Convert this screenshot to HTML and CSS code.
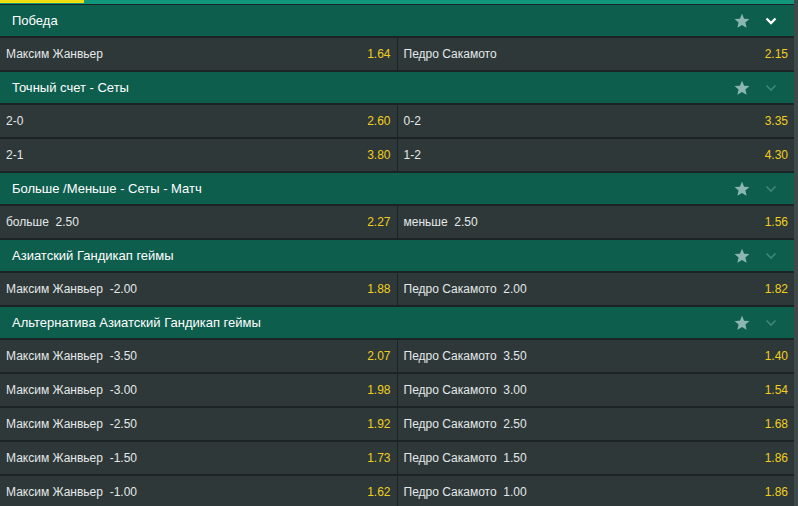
FILE: index.html
```html
<!DOCTYPE html>
<html>
<head>
	<title>Рынки</title>
	<link rel="stylesheet" href="styles.css">
</head>
<body>
	<div class="page">
		<div class="markets">
			<div class="tabbar"><span class="tab-active"></span></div>

			<!-- Победа -->
			<div class="market-head">
				<span class="market-title">Победа</span>
				<svg class="star" viewBox="0 0 16 16"><polygon points="8,0.8 10.1,5.7 15.4,6.1 11.4,9.6 12.6,14.8 8,12.1 3.4,14.8 4.6,9.6 0.6,6.1 5.9,5.7"/></svg>
				<svg class="chevron open" viewBox="0 0 12 8"><polyline points="1.5,1.5 6,6 10.5,1.5"/></svg>
			</div>
			<div class="row">
				<div class="cell"><span class="name">Максим Жанвьер</span><span class="odd">1.64</span></div>
				<div class="cell"><span class="name">Педро Сакамото</span><span class="odd">2.15</span></div>
			</div>

			<!-- Точный счет -->
			<div class="market-head">
				<span class="market-title">Точный счет - Сеты</span>
				<svg class="star" viewBox="0 0 16 16"><polygon points="8,0.8 10.1,5.7 15.4,6.1 11.4,9.6 12.6,14.8 8,12.1 3.4,14.8 4.6,9.6 0.6,6.1 5.9,5.7"/></svg>
				<svg class="chevron" viewBox="0 0 12 8"><polyline points="1.5,1.5 6,6 10.5,1.5"/></svg>
			</div>
			<div class="row">
				<div class="cell"><span class="name">2-0</span><span class="odd">2.60</span></div>
				<div class="cell"><span class="name">0-2</span><span class="odd">3.35</span></div>
			</div>
			<div class="row">
				<div class="cell"><span class="name">2-1</span><span class="odd">3.80</span></div>
				<div class="cell"><span class="name">1-2</span><span class="odd">4.30</span></div>
			</div>

			<!-- Больше / Меньше -->
			<div class="market-head">
				<span class="market-title">Больше /Меньше - Сеты - Матч</span>
				<svg class="star" viewBox="0 0 16 16"><polygon points="8,0.8 10.1,5.7 15.4,6.1 11.4,9.6 12.6,14.8 8,12.1 3.4,14.8 4.6,9.6 0.6,6.1 5.9,5.7"/></svg>
				<svg class="chevron" viewBox="0 0 12 8"><polyline points="1.5,1.5 6,6 10.5,1.5"/></svg>
			</div>
			<div class="row">
				<div class="cell"><span class="name">больше  2.50</span><span class="odd">2.27</span></div>
				<div class="cell"><span class="name">меньше  2.50</span><span class="odd">1.56</span></div>
			</div>

			<!-- Азиатский гандикап -->
			<div class="market-head">
				<span class="market-title">Азиатский Гандикап геймы</span>
				<svg class="star" viewBox="0 0 16 16"><polygon points="8,0.8 10.1,5.7 15.4,6.1 11.4,9.6 12.6,14.8 8,12.1 3.4,14.8 4.6,9.6 0.6,6.1 5.9,5.7"/></svg>
				<svg class="chevron" viewBox="0 0 12 8"><polyline points="1.5,1.5 6,6 10.5,1.5"/></svg>
			</div>
			<div class="row">
				<div class="cell"><span class="name">Максим Жанвьер  -2.00</span><span class="odd">1.88</span></div>
				<div class="cell"><span class="name">Педро Сакамото  2.00</span><span class="odd">1.82</span></div>
			</div>

			<!-- Альтернатива -->
			<div class="market-head">
				<span class="market-title">Альтернатива Азиатский Гандикап геймы</span>
				<svg class="star" viewBox="0 0 16 16"><polygon points="8,0.8 10.1,5.7 15.4,6.1 11.4,9.6 12.6,14.8 8,12.1 3.4,14.8 4.6,9.6 0.6,6.1 5.9,5.7"/></svg>
				<svg class="chevron" viewBox="0 0 12 8"><polyline points="1.5,1.5 6,6 10.5,1.5"/></svg>
			</div>
			<div class="row">
				<div class="cell"><span class="name">Максим Жанвьер  -3.50</span><span class="odd">2.07</span></div>
				<div class="cell"><span class="name">Педро Сакамото  3.50</span><span class="odd">1.40</span></div>
			</div>
			<div class="row">
				<div class="cell"><span class="name">Максим Жанвьер  -3.00</span><span class="odd">1.98</span></div>
				<div class="cell"><span class="name">Педро Сакамото  3.00</span><span class="odd">1.54</span></div>
			</div>
			<div class="row">
				<div class="cell"><span class="name">Максим Жанвьер  -2.50</span><span class="odd">1.92</span></div>
				<div class="cell"><span class="name">Педро Сакамото  2.50</span><span class="odd">1.68</span></div>
			</div>
			<div class="row">
				<div class="cell"><span class="name">Максим Жанвьер  -1.50</span><span class="odd">1.73</span></div>
				<div class="cell"><span class="name">Педро Сакамото  1.50</span><span class="odd">1.86</span></div>
			</div>
			<div class="row">
				<div class="cell"><span class="name">Максим Жанвьер  -1.00</span><span class="odd">1.62</span></div>
				<div class="cell"><span class="name">Педро Сакамото  1.00</span><span class="odd">1.86</span></div>
			</div>
		</div>
		<div class="scrollbar"></div>
	</div>
</body>
</html>
```

FILE: styles.css
```css
body { margin: 0; background: #1c2324; font-family: "Liberation Sans", Arial, sans-serif; color: #e4e8e8; overflow: hidden; }
.page { display: flex; height: 506px; }
.markets { flex: 1; background: #1c2324; }
.scrollbar { width: 4px; background: #3f494a; }

/* top tab strip */
.tabbar { height: 4px; background: #11977b; }
.tab-active { display: block; width: 84px; height: 3px; background: #f2de0f; }

/* market header */
.market-head {
    display: flex;
    align-items: center;
    height: 31px;
    border-top: 1px solid #1c2324;
    border-bottom: 1px solid #1c2324;
    background: #0e5e4e;
    padding: 0 17px 0 12px;
}
.market-title { flex: 1; font-size: 13px; color: #ffffff; }
.star { width: 16px; height: 16px; fill: #8cb7b0; margin-right: 15px; }
.chevron { width: 12px; height: 8px; fill: none; stroke: #3f8675; stroke-width: 1.6; }
.chevron.open { stroke: #ffffff; stroke-width: 2.4; }

/* selections */
.row {
    display: flex;
    height: 32px;
    border-top: 1px solid #1c2324;
    border-bottom: 1px solid #1c2324;
}
.cell {
    flex: 1;
    display: flex;
    align-items: center;
    justify-content: space-between;
    padding: 0 6px;
    background: #2e3839;
    font-size: 12px;
}
.cell + .cell { margin-left: 1px; }
.name { white-space: pre; color: #e4e8e8; }
.odd { color: #f0cf1c; }
```
